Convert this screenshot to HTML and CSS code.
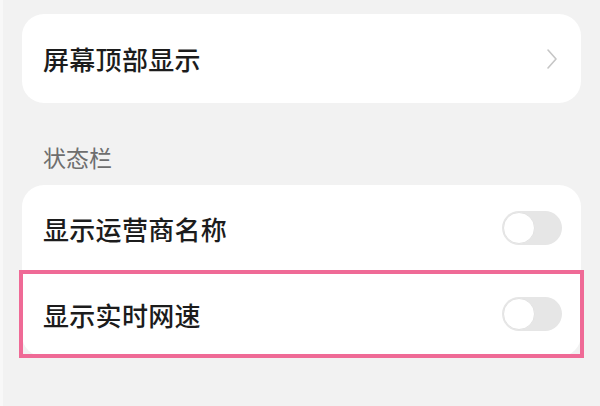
FILE: index.html
```html
<!DOCTYPE html>
<html lang="zh-CN">
<head>
<meta charset="utf-8">
<link rel="stylesheet" href="styles.css">
</head>
<body>
<div class="page">
  <div class="card card-single">
    <div class="row">
      <span class="label">屏幕顶部显示</span>
      <svg class="chevron" width="12" height="22" viewBox="0 0 12 22"><polyline points="2,2 10,11 2,20" fill="none" stroke="#c6c6c6" stroke-width="1.6" stroke-linecap="round" stroke-linejoin="round"/></svg>
    </div>
  </div>
  <div class="section-title">状态栏</div>
  <div class="card">
    <div class="row row-toggle">
      <span class="label">显示运营商名称</span>
      <span class="switch"><span class="knob"></span></span>
    </div>
    <div class="row row-toggle row-highlight">
      <span class="label">显示实时网速</span>
      <span class="switch"><span class="knob"></span></span>
    </div>
  </div>
</div>
</body>
</html>
```
FILE: styles.css
```css
html, body {
  margin: 0;
  padding: 0;
}
body {
  width: 600px;
  height: 406px;
  overflow: hidden;
  background: #f2f2f2;
  font-family: "Noto Sans CJK SC", "Noto Sans", sans-serif;
}
.page {
  height: 406px;
  box-sizing: border-box;
  padding: 14px 19px 0 19px;
  border-left: 3px solid #f8f8f8;
}
.card {
  background: #ffffff;
  border-radius: 22px;
}
.row {
  display: flex;
  align-items: center;
  justify-content: space-between;
  height: 89px;
  padding: 0 23px 0 21px;
  position: relative;
}
.row-toggle {
  height: 86px;
  padding-right: 19px;
}
.label {
  font-size: 26px;
  color: #1c1c1c;
  font-weight: 500;
  letter-spacing: 0.3px;
}
.chevron {
  display: block;
}
.section-title {
  height: 82px;
  box-sizing: border-box;
  padding: 38px 0 0 21px;
  font-size: 23px;
  color: #6e6e6e;
  line-height: 32px;
}
.switch {
  width: 60px;
  height: 34px;
  border-radius: 17px;
  background: #e6e6e6;
  position: relative;
  display: block;
}
.knob {
  position: absolute;
  left: 1px;
  top: 1px;
  width: 30px;
  height: 30px;
  border-radius: 50%;
  background: #ffffff;
  border: 1px solid #e2e2e2;
}
.row-highlight::after {
  content: "";
  position: absolute;
  left: -3px;
  right: -3px;
  top: -1px;
  bottom: -1px;
  border: 4px solid #ef6a96;
  pointer-events: none;
}
```
